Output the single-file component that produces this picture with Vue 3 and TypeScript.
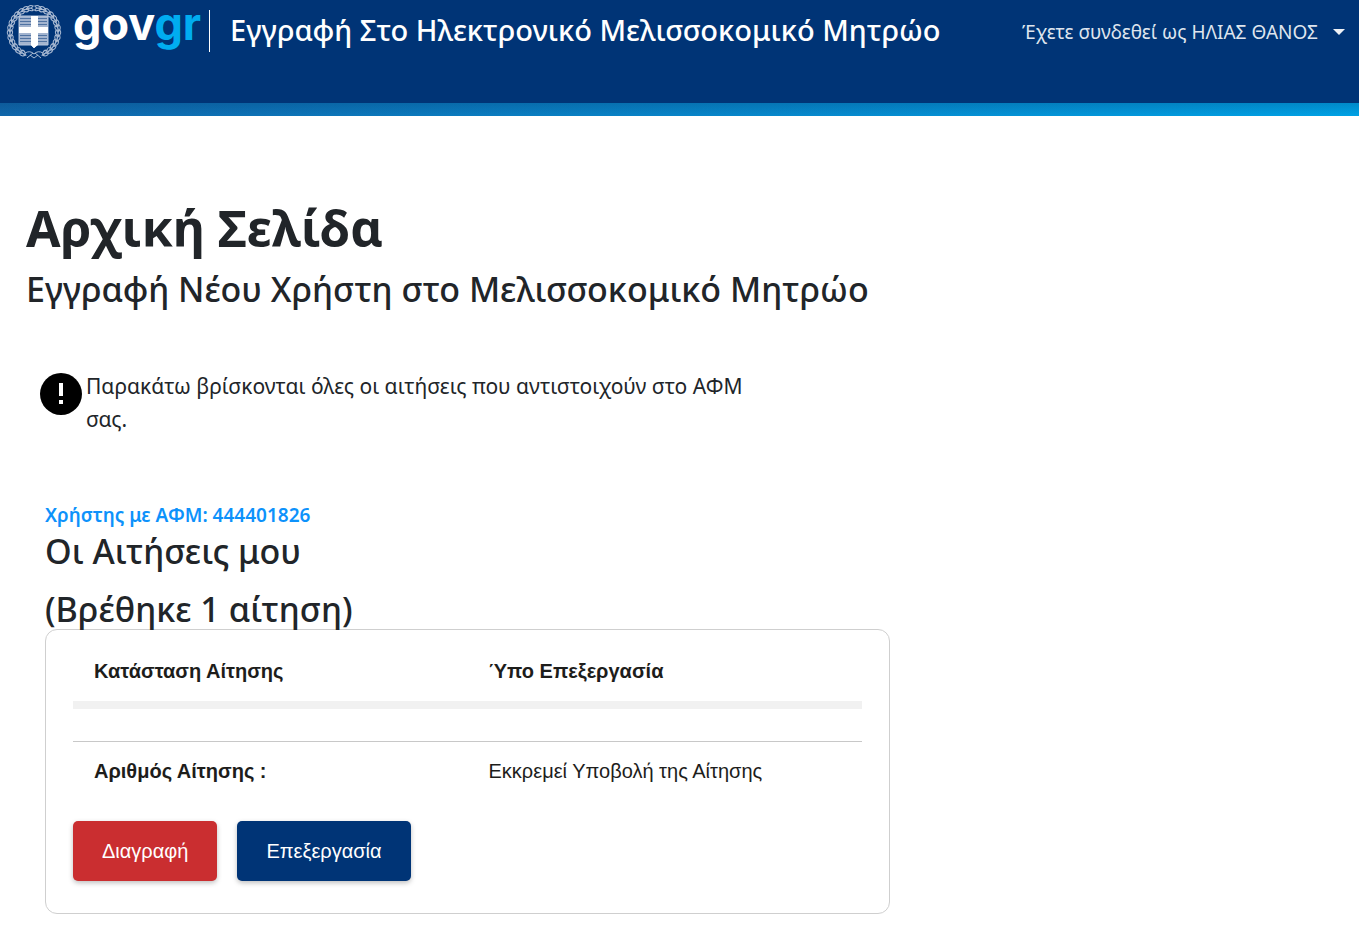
<script setup lang="ts">
import { ref } from 'vue'

interface Field {
  label: string
  value: string
}

const userName = ref<string>('ΗΛΙΑΣ ΘΑΝΟΣ')
const afm = ref<string>('444401826')
const status: Field = { label: 'Κατάσταση Αίτησης', value: 'Ύπο Επεξεργασία' }
const fields: Field[] = [{ label: 'Αριθμός Αίτησης :', value: 'Εκκρεμεί Υποβολή της Αίτησης' }]

const leafAngles: number[] = Array.from({ length: 13 }, (_, i) => 4 + i * 12)
const stripes: number[] = [14, 17, 20, 31, 34, 37]
</script>

<template>
  <div class="page">
    <header class="header">
      <a class="logo" href="#" aria-label="govgr">
        <svg class="emblem" viewBox="0 0 56 56" aria-hidden="true">
          <g fill="none" stroke="#a9bad3" stroke-width="1">
            <g v-for="side in [1, -1]" :key="side" :transform="`translate(28 28) scale(${side} 1)`">
              <g v-for="a in leafAngles" :key="a" :transform="`rotate(${a})`">
                <path d="M5 -24 Q3 -28 -1 -26 Q1 -23 5 -24 M5 -24 Q2 -20 -1 -22 Q1 -25 5 -24 M6 -24 H0" />
              </g>
            </g>
            <path d="M19 49 Q24 46 28 50 Q32 46 37 49 M21 54 L27 49 M35 54 L29 49 M24 51 L28 54 L32 51" />
          </g>
          <path d="M13 12 H42 V41 H31 L28 44 L25 41 H13 Z" fill="#a3b4cf" />
          <g stroke="#003476" stroke-width="1" opacity="0.5">
            <path v-for="y in stripes" :key="y" :d="`M14 ${y + 0.5} H41`" />
          </g>
          <path d="M13 12 H42 V41 H31 L28 44 L25 41 H13 Z" fill="none" stroke="#b7c6dc" />
          <path d="M25 12 H32 V23 H42 V29 H32 V41 L28 44 L25 41 V29 H13 V23 H25 Z" fill="#fff" />
        </svg>
        <span class="wordmark">gov<span class="wordmark-accent">gr</span></span>
      </a>
      <span class="divider"></span>
      <span class="app-name">Εγγραφή Στο Ηλεκτρονικό Μελισσοκομικό Μητρώο</span>
      <button class="user-menu" type="button">
        Έχετε συνδεθεί ως {{ userName }}
        <span class="caret"></span>
      </button>
    </header>
    <div class="ribbon"></div>

    <main class="main">
      <h1>Αρχική Σελίδα</h1>
      <h2 class="subtitle">Εγγραφή Νέου Χρήστη στο Μελισσοκομικό Μητρώο</h2>

      <div class="notice">
        <svg class="notice-icon" viewBox="0 0 42 42" aria-hidden="true">
          <circle cx="21" cy="21" r="21" />
          <path d="M19 10h4v13h-4zM19 27h4v4h-4z" fill="#fff" />
        </svg>
        <p>Παρακάτω βρίσκονται όλες οι αιτήσεις που αντιστοιχούν στο ΑΦΜ σας.</p>
      </div>

      <section class="applications">
        <p class="afm">Χρήστης με ΑΦΜ: {{ afm }}</p>
        <h2>Οι Αιτήσεις μου</h2>
        <h2 class="count">(Βρέθηκε 1 αίτηση)</h2>

        <article class="card">
          <dl class="row status">
            <dt>{{ status.label }}</dt>
            <dd>{{ status.value }}</dd>
          </dl>
          <dl v-for="f in fields" :key="f.label" class="row detail">
            <dt>{{ f.label }}</dt>
            <dd>{{ f.value }}</dd>
          </dl>
          <div class="actions">
            <button class="btn danger" type="button">Διαγραφή</button>
            <button class="btn primary" type="button">Επεξεργασία</button>
          </div>
        </article>
      </section>
    </main>
  </div>
</template>

<style>
body {
  margin: 0;
  background: #fff;
}
</style>

<style scoped>
.page {
  font-family: "Noto Sans", "Open Sans", sans-serif;
  color: #212529;
}
h1,
h2,
p,
dl,
dd {
  margin: 0;
}
.header {
  display: flex;
  align-items: flex-start;
  height: 103px;
  padding: 0 14px 0 6px;
  box-sizing: border-box;
  background: #003476;
  color: #fff;
}
.logo {
  display: flex;
  align-items: flex-start;
  color: #fff;
  text-decoration: none;
}
.emblem {
  width: 56px;
  height: 56px;
  margin-top: 4px;
}
.wordmark {
  width: 136px;
  margin-left: 11px;
  font: 700 45px/48px Inter, sans-serif;
}
.wordmark-accent {
  color: #00adf0;
}
.divider {
  width: 1px;
  height: 42px;
  margin-top: 10px;
  background: #fff;
}
.app-name {
  margin-left: 20px;
  font-size: 29px;
  font-weight: 500;
  line-height: 60px;
  white-space: nowrap;
}
.user-menu {
  display: flex;
  align-items: center;
  gap: 15px;
  margin-left: auto;
  padding: 0;
  border: 0;
  background: none;
  color: #dfe5ee;
  font: 19px/64px "Noto Sans", sans-serif;
  white-space: nowrap;
}
.caret {
  border: 6px solid transparent;
  border-top-color: #eef1f6;
  border-bottom: 0;
}
.ribbon {
  height: 13px;
  background:
    linear-gradient(rgba(0, 40, 90, 0.2), rgba(0, 40, 90, 0)),
    linear-gradient(90deg, #1067ab, #00a2e5);
}
.main {
  max-width: 864px;
  padding: 82px 26px 12px;
}
h1 {
  font-size: 50px;
  font-weight: 700;
  line-height: 60px;
}
h2 {
  font-size: 34px;
  font-weight: 500;
  line-height: 40px;
  white-space: nowrap;
}
.subtitle {
  margin-top: 11px;
}
.notice {
  display: flex;
  gap: 4px;
  max-width: 720px;
  margin: 61px 0 0 14px;
}
.notice-icon {
  flex: none;
  width: 42px;
  height: 42px;
  margin-top: 3px;
}
.notice p {
  font-size: 21px;
  line-height: 33px;
}
.applications {
  margin: 64px 0 0 19px;
}
.afm {
  color: #0d92fb;
  font-size: 19px;
  font-weight: 600;
  line-height: 31px;
}
.count {
  margin-top: 18px;
}
.card {
  padding: 21px 27px 32px;
  border: 1px solid #cfcfcf;
  border-radius: 12px;
  color: #1d1d1b;
  font: 20px/40px "Liberation Sans", Arial, sans-serif;
}
.row {
  display: grid;
  grid-template-columns: 1fr 1fr;
}
.row dt,
.row dd {
  padding: 0 21px;
}
.row dt,
.status dd {
  font-weight: 700;
}
.status {
  padding-bottom: 10px;
  border-bottom: 8px solid #f1f1f1;
}
.detail {
  margin-top: 32px;
  padding: 9px 0 30px;
  border-top: 1px solid #c8c8c8;
}
.actions {
  display: flex;
  gap: 20px;
}
.btn {
  height: 60px;
  padding: 0 29px;
  border: 0;
  border-radius: 5px;
  color: #fff;
  font: 20px "Liberation Sans", Arial, sans-serif;
  box-shadow: 0 2px 5px rgba(0, 0, 0, 0.25);
}
.danger {
  background: #ca2e30;
}
.primary {
  background: #003476;
}
</style>
